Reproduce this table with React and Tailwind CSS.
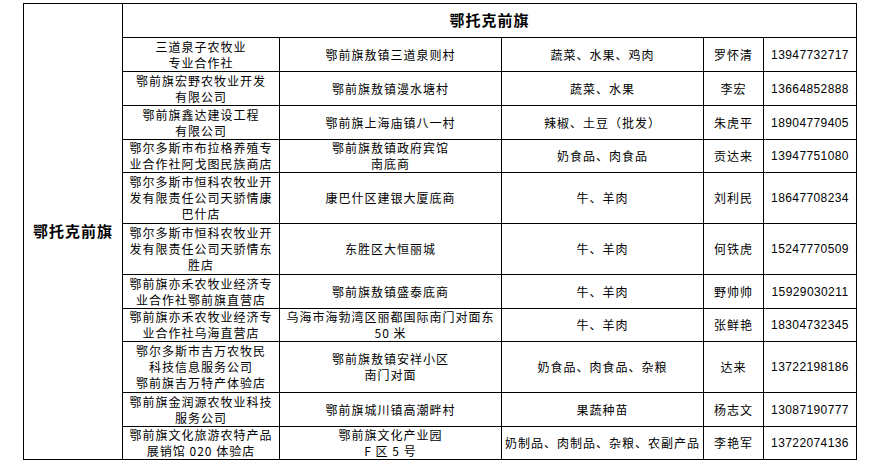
import React from "react";

const rows = [
  { h: "h-[34px]", c: ["三道泉子农牧业", "专业合作社"], a: ["鄂前旗敖镇三道泉则村"], p: "蔬菜、水果、鸡肉", n: "罗怀清", t: "13947732717" },
  { h: "h-[34px]", c: ["鄂前旗宏野农牧业开发", "有限公司"], a: ["鄂前旗敖镇漫水塘村"], p: "蔬菜、水果", n: "李宏", t: "13664852888" },
  { h: "h-[34px]", c: ["鄂前旗鑫达建设工程", "有限公司"], a: ["鄂前旗上海庙镇八一村"], p: "辣椒、土豆（批发）", n: "朱虎平", t: "18904779405" },
  { h: "h-[33px]", c: ["鄂尔多斯市布拉格养殖专", "业合作社阿戈图民族商店"], a: ["鄂前旗敖镇政府宾馆", "南底商"], p: "奶食品、肉食品", n: "贡达来", t: "13947751080" },
  { h: "h-[51px]", c: ["鄂尔多斯市恒科农牧业开", "发有限责任公司天骄情康", "巴什店"], a: ["康巴什区建银大厦底商"], p: "牛、羊肉", n: "刘利民", t: "18647708234" },
  { h: "h-[51px]", c: ["鄂尔多斯市恒科农牧业开", "发有限责任公司天骄情东", "胜店"], a: ["东胜区大恒丽城"], p: "牛、羊肉", n: "何铁虎", t: "15247770509" },
  { h: "h-[34px]", c: ["鄂前旗亦禾农牧业经济专", "业合作社鄂前旗直营店"], a: ["鄂前旗敖镇盛泰底商"], p: "牛、羊肉", n: "野帅帅", t: "15929030211" },
  { h: "h-[33px]", c: ["鄂前旗亦禾农牧业经济专", "业合作社乌海直营店"], a: ["乌海市海勃湾区丽都国际南门对面东", "50 米"], p: "牛、羊肉", n: "张鲜艳", t: "18304732345" },
  { h: "h-[51px]", c: ["鄂尔多斯市吉万农牧民", "科技信息服务公司", "鄂前旗吉万特产体验店"], a: ["鄂前旗敖镇安祥小区", "南门对面"], p: "奶食品、肉食品、杂粮", n: "达来", t: "13722198186" },
  { h: "h-[34px]", c: ["鄂前旗金润源农牧业科技", "服务公司"], a: ["鄂前旗城川镇高潮畔村"], p: "果蔬种苗", n: "杨志文", t: "13087190777" },
  { h: "h-[33px]", c: ["鄂前旗文化旅游农特产品", "展销馆 020 体验店"], a: ["鄂前旗文化产业园", "F 区 5 号"], p: "奶制品、肉制品、杂粮、农副产品", n: "李艳军", t: "13722074136" },
];

const cell =
  "border-r border-b border-black flex flex-col items-center justify-center text-center whitespace-nowrap text-[12px] leading-[16px] tracking-[1px]";

function Lines({ items }) {
  return items.map((s, i) => <div key={i}>{s}</div>);
}

export default function App() {
  return (
    <div className="w-[885px] h-[462px] bg-white text-black font-['Noto_Sans_CJK_SC','Liberation_Sans',sans-serif] pt-[3px] pl-[23px] overflow-hidden">
      <div className="flex w-[834px] border-l border-t border-black">
        <div className="w-[99px] border-r border-b border-black flex items-center justify-center text-[15px] font-bold tracking-[1px]">
          鄂托克前旗
        </div>
        <div className="flex flex-col w-[734px]">
          <div className="h-[34px] border-r border-b border-black flex items-center justify-center text-[15px] font-bold tracking-[1px]">
            鄂托克前旗
          </div>
          {rows.map((r, i) => (
            <div key={i} className={`grid grid-cols-[157px_222px_202px_60px_93px] ${r.h}`}>
              <div className={cell}>
                <Lines items={r.c} />
              </div>
              <div className={cell}>
                <Lines items={r.a} />
              </div>
              <div className={cell}>{r.p}</div>
              <div className={cell}>{r.n}</div>
              <div className="border-r border-b border-black flex items-center justify-center font-['Liberation_Sans',sans-serif] text-[12px] tracking-[0.4px]">
                {r.t}
              </div>
            </div>
          ))}
        </div>
      </div>
    </div>
  );
}
